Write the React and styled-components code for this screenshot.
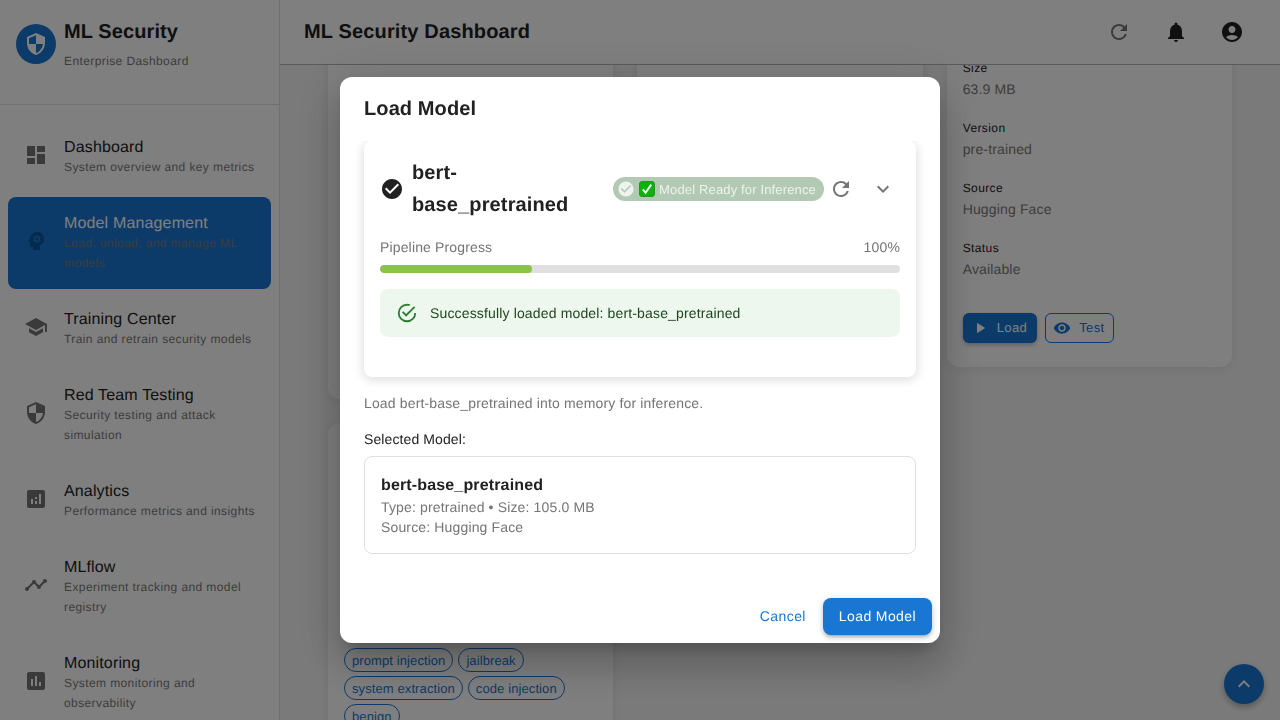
import React from 'react'
import styled, { createGlobalStyle } from 'styled-components'
import {
  MdDashboard, MdPsychology, MdSchool, MdSecurity, MdAnalytics, MdTimeline, MdAssessment,
  MdRefresh, MdNotifications, MdAccountCircle, MdPlayArrow, MdVisibility, MdCheckCircle,
  MdExpandMore, MdKeyboardArrowUp,
} from 'react-icons/md'

const navItems = [
  { icon: MdDashboard, title: 'Dashboard', sub: 'System overview and key metrics' },
  { icon: MdPsychology, title: 'Model Management', sub: 'Load, unload, and manage ML models', active: true },
  { icon: MdSchool, title: 'Training Center', sub: 'Train and retrain security models' },
  { icon: MdSecurity, title: 'Red Team Testing', sub: 'Security testing and attack simulation' },
  { icon: MdAnalytics, title: 'Analytics', sub: 'Performance metrics and insights' },
  { icon: MdTimeline, title: 'MLflow', sub: 'Experiment tracking and model registry' },
  { icon: MdAssessment, title: 'Monitoring', sub: 'System monitoring and observability' },
]

const details = [
  ['Size', '63.9 MB'],
  ['Version', 'pre-trained'],
  ['Source', 'Hugging Face'],
  ['Status', 'Available'],
]

const chips = ['prompt injection', 'jailbreak', 'system extraction', 'code injection', 'benign']

const SuccessOutline = () => (
  <svg width="22" height="22" viewBox="0 0 24 24" fill="currentColor">
    <path d="M20,12A8,8 0 0,1 12,20A8,8 0 0,1 4,12A8,8 0 0,1 12,4C12.76,4 13.5,4.11 14.2,4.31L15.77,2.74C14.61,2.26 13.34,2 12,2A10,10 0 0,0 2,12A10,10 0 0,0 12,22A10,10 0 0,0 22,12M7.91,10.08L6.5,11.5L11,16L21,6L19.59,4.58L11,13.17L7.91,10.08Z" />
  </svg>
)

// the green check mark emoji, no colour emoji font is installed
const CheckEmoji = () => (
  <svg width="16" height="16" viewBox="0 0 16 16" style={{ flex: 'none' }}>
    <rect x="0.5" y="0.5" width="15" height="15" rx="2.5" fill="#0ab30a" stroke="#2f8f2f" />
    <path d="M3.8 8.4 L6.6 11.6 L12.2 3.6" fill="none" stroke="#fff" strokeWidth="1.9" />
  </svg>
)

const App = () => {
  return (
    <Page>
      <GlobalStyle />
      <Sidebar>
        <Brand>
          <BrandLogo><MdSecurity size={24} /></BrandLogo>
          <div>
            <BrandName>ML Security</BrandName>
            <BrandSub>Enterprise Dashboard</BrandSub>
          </div>
        </Brand>
        <NavList>
          {navItems.map((item) => (
            <NavItem key={item.title} $active={item.active}>
              <NavIcon $active={item.active}><item.icon size={24} /></NavIcon>
              <div>
                <NavTitle $active={item.active}>{item.title}</NavTitle>
                <NavSub>{item.sub}</NavSub>
              </div>
            </NavItem>
          ))}
        </NavList>
      </Sidebar>

      <Main>
        <TopBar>
          <TopTitle>ML Security Dashboard</TopTitle>
          <TopActions>
            <TopButton $muted><MdRefresh size={24} /></TopButton>
            <TopButton><MdNotifications size={24} /></TopButton>
            <TopButton><MdAccountCircle size={24} /></TopButton>
          </TopActions>
        </TopBar>
        <Content>
          <CardGrid>
            <Column>
              <Card $height={358} />
              <Card>
                <ChipWrap>
                  {chips.map((c) => <TagChip key={c}>{c}</TagChip>)}
                </ChipWrap>
              </Card>
            </Column>
            <Column>
              <Card $height={358} />
            </Column>
            <Column>
              <Card>
                {details.map(([label, value]) => (
                  <Detail key={label}>
                    <DetailLabel>{label}</DetailLabel>
                    <DetailValue>{value}</DetailValue>
                  </Detail>
                ))}
                <CardButtons>
                  <SmallButton $filled><MdPlayArrow size={18} /><span>Load</span></SmallButton>
                  <SmallButton><MdVisibility size={18} /><span>Test</span></SmallButton>
                </CardButtons>
              </Card>
            </Column>
          </CardGrid>
        </Content>
      </Main>

      <Fab><MdKeyboardArrowUp size={24} /></Fab>

      <Overlay>
        <Dialog>
          <DialogTitle>Load Model</DialogTitle>
          <DialogContent>
            <StatusCard>
              <StatusHeader>
                <MdCheckCircle size={24} color="#212121" />
                <StatusName>bert-base_pretrained</StatusName>
                <ReadyChip>
                  <MdCheckCircle size={18} />
                  <CheckEmoji />
                  <span>Model Ready for Inference</span>
                </ReadyChip>
                <HeaderButton $pad={5}><MdRefresh size={24} /></HeaderButton>
                <HeaderButton $pad={8} $end><MdExpandMore size={24} /></HeaderButton>
              </StatusHeader>
              <ProgressRow>
                <span>Pipeline Progress</span>
                <span>100%</span>
              </ProgressRow>
              <ProgressTrack>
                <ProgressFill style={{ width: '29.2%' }} />
              </ProgressTrack>
              <SuccessAlert>
                <SuccessOutline />
                <span>Successfully loaded model: bert-base_pretrained</span>
              </SuccessAlert>
            </StatusCard>
            <Description>Load bert-base_pretrained into memory for inference.</Description>
            <SelectedLabel>Selected Model:</SelectedLabel>
            <SelectedBox>
              <SelectedName>bert-base_pretrained</SelectedName>
              <SelectedMeta>Type: pretrained • Size: 105.0 MB</SelectedMeta>
              <SelectedMeta>Source: Hugging Face</SelectedMeta>
            </SelectedBox>
          </DialogContent>
          <DialogActions>
            <CancelButton>Cancel</CancelButton>
            <PrimaryButton>Load Model</PrimaryButton>
          </DialogActions>
        </Dialog>
      </Overlay>
    </Page>
  )
}

const GlobalStyle = createGlobalStyle`
  html, body {
    margin: 0;
    height: 100%;
    overflow: hidden;
    background: #f5f5f5;
    font-family: "Liberation Sans", Arial, sans-serif;
    text-rendering: geometricPrecision;
    color: #212121;
  }
  * { box-sizing: border-box; }
  button { font-family: inherit; text-rendering: inherit; }
`

const Page = styled.div`
  display: flex;
  width: 1280px;
  height: 720px;
  overflow: hidden;
`

const Sidebar = styled.aside`
  flex: 0 0 280px;
  height: 720px;
  overflow: hidden;
  background: #fff;
  border-right: 1px solid #e0e0e0;
`

const Brand = styled.div`
  display: flex;
  gap: 8px;
  height: 105px;
  padding: 16px 16px 0;
  border-bottom: 1px solid #e0e0e0;
`

const BrandLogo = styled.div`
  display: flex;
  align-items: center;
  justify-content: center;
  width: 40px;
  height: 40px;
  margin-top: 8px;
  border-radius: 50%;
  background: #1976d2;
  color: #fff;
`

const BrandName = styled.div`
  font-size: 20px;
  font-weight: 700;
  line-height: 32px;
  letter-spacing: 0.1px;
`

const BrandSub = styled.div`
  margin-top: 3px;
  font-size: 12px;
  line-height: 20px;
  letter-spacing: 0.4px;
  color: #7a7a7a;
`

const NavList = styled.nav`
  display: flex;
  flex-direction: column;
  gap: 4px;
  padding: 16px 8px 0;
`

const NavItem = styled.div`
  display: flex;
  align-items: center;
  flex-shrink: 0;
  padding: 12px 16px 16px;
  border-radius: 8px;
  background: ${(p) => (p.$active ? '#1976d2' : 'transparent')};
`

const NavIcon = styled.div`
  display: flex;
  flex: 0 0 40px;
  color: ${(p) => (p.$active ? '#0a54a0' : '#757575')};
`

const NavTitle = styled.div`
  margin: 3px 0 -3px;
  font-size: 16px;
  line-height: 24px;
  letter-spacing: 0.15px;
  color: ${(p) => (p.$active ? '#fff' : '#212121')};
`

const NavSub = styled.div`
  font-size: 12px;
  line-height: 20px;
  letter-spacing: 0.4px;
  color: #7a7a7a;
`

const Main = styled.main`
  display: flex;
  flex: 1;
  flex-direction: column;
  min-width: 0;
`

const TopBar = styled.header`
  display: flex;
  flex: 0 0 65px;
  align-items: center;
  justify-content: space-between;
  padding: 0 28px 0 24px;
  background: #fff;
  border-bottom: 1px solid #b4b4b4;
  position: relative;
  z-index: 1;
`

const TopTitle = styled.h1`
  margin: 0;
  font-size: 20px;
  font-weight: 700;
  line-height: 32px;
  letter-spacing: 0.15px;
`

const TopActions = styled.div`
  display: flex;
  gap: 16px;
`

const TopButton = styled.div`
  display: flex;
  align-items: center;
  justify-content: center;
  width: 40px;
  height: 40px;
  margin-right: ${(p) => (p.$muted ? '1px' : '0')};
  margin-left: ${(p) => (p.$muted ? '-1px' : '0')};
  color: ${(p) => (p.$muted ? '#757575' : '#212121')};
`

const Content = styled.div`
  flex: 1;
  overflow: hidden;
  padding: 0 48px;
`

const CardGrid = styled.div`
  display: grid;
  grid-template-columns: repeat(3, 1fr);
  gap: 24px;
  align-items: start;
  margin-top: -24px;
`

const Column = styled.div`
  display: flex;
  flex-direction: column;
  gap: 24px;
`

const Card = styled.section`
  height: ${(p) => (p.$height ? `${p.$height}px` : 'auto')};
  padding: 16px 16px 24px;
  background: #fff;
  border-radius: 12px;
  box-shadow: 0 2px 12px rgba(0, 0, 0, 0.08);
`

const ChipWrap = styled.div`
  display: flex;
  flex-wrap: wrap;
  gap: 4px 5px;
  margin-top: 209px;
`

const TagChip = styled.span`
  display: inline-flex;
  align-items: center;
  height: 24px;
  padding: 0 7px;
  font-size: 13px;
  letter-spacing: 0.1px;
  color: #1976d2;
  border: 1px solid #1976d2;
  border-radius: 12px;
`

const Detail = styled.div`
  padding-top: 1px;
  margin-bottom: 18px;
`

const DetailLabel = styled.div`
  font-size: 12px;
  line-height: 20px;
  letter-spacing: 0.4px;
  color: #212121;
`

const DetailValue = styled.div`
  margin-top: 1px;
  font-size: 14px;
  line-height: 20px;
  letter-spacing: 0.15px;
  color: #7a7a7a;
`

const CardButtons = styled.div`
  display: flex;
  gap: 8px;
  margin-top: 34px;
`

const SmallButton = styled.button`
  display: inline-flex;
  align-items: center;
  gap: 8px;
  height: 30px;
  padding: ${(p) => (p.$filled ? '0 10px 0 8px' : '0 8px 0 7px')};
  font-size: 13px;
  letter-spacing: 0.4px;
  border-radius: 6px;
  color: ${(p) => (p.$filled ? '#fff' : '#1976d2')};
  background: ${(p) => (p.$filled ? '#1976d2' : 'transparent')};
  border: ${(p) => (p.$filled ? 'none' : '1px solid #1976d2')};
  box-shadow: ${(p) => (p.$filled ? '0 2px 4px rgba(0, 0, 0, 0.25)' : 'none')};

  span {
    margin-bottom: 2px;
  }
`

const Fab = styled.button`
  position: fixed;
  right: 16px;
  bottom: 16px;
  display: flex;
  align-items: center;
  justify-content: center;
  width: 40px;
  height: 40px;
  padding: 0;
  color: #fff;
  background: #1976d2;
  border: none;
  border-radius: 50%;
  box-shadow: 0 3px 6px rgba(0, 0, 0, 0.3);
`

const Overlay = styled.div`
  position: fixed;
  inset: 0;
  z-index: 10;
  display: flex;
  align-items: center;
  justify-content: center;
  background: rgba(0, 0, 0, 0.5);
`

const Dialog = styled.div`
  display: flex;
  flex-direction: column;
  width: 600px;
  height: 566px;
  background: #fff;
  border-radius: 12px;
  box-shadow: 0 11px 15px -7px rgba(0, 0, 0, 0.2), 0 24px 38px 3px rgba(0, 0, 0, 0.14), 0 9px 46px 8px rgba(0, 0, 0, 0.12);
`

const DialogTitle = styled.h2`
  flex: none;
  margin: 0;
  padding: 16px 24px;
  font-size: 20px;
  font-weight: 700;
  line-height: 32px;
  letter-spacing: 0.1px;
`

const DialogContent = styled.div`
  flex: 1;
  overflow: hidden;
  padding: 0 24px;
`

const StatusCard = styled.div`
  height: 236px;
  padding: 16px;
  border-radius: 8px;
  box-shadow: 0 2px 12px rgba(0, 0, 0, 0.16);
`

const StatusHeader = styled.div`
  display: flex;
  align-items: center;
  height: 64px;
`

const StatusName = styled.div`
  flex: 1;
  min-width: 0;
  margin: 0 8px;
  font-size: 20px;
  font-weight: 700;
  line-height: 32px;
  letter-spacing: 0.13px;
`

const ReadyChip = styled.div`
  display: inline-flex;
  flex: none;
  align-items: center;
  gap: 4px;
  height: 24px;
  padding: 0 8px 0 4px;
  font-size: 13px;
  letter-spacing: 0.15px;
  white-space: nowrap;
  color: #eef3ee;
  background: #b2c9b4;
  border-radius: 12px;
`

const HeaderButton = styled.div`
  display: flex;
  flex: none;
  padding: ${(p) => p.$pad}px;
  margin-left: ${(p) => (p.$end ? '5px' : '0')};
  margin-right: ${(p) => (p.$end ? '-3px' : '0')};
  color: #757575;
`

const ProgressRow = styled.div`
  display: flex;
  justify-content: space-between;
  margin-top: 16px;
  font-size: 14px;
  line-height: 20px;
  letter-spacing: 0.15px;
  color: #757575;
`

const ProgressTrack = styled.div`
  height: 8px;
  margin-top: 8px;
  overflow: hidden;
  background: #e0e0e0;
  border-radius: 4px;
`

const ProgressFill = styled.div`
  height: 100%;
  background: #8bc34a;
  border-radius: 4px;
`

const SuccessAlert = styled.div`
  display: flex;
  align-items: center;
  gap: 12px;
  height: 48px;
  margin-top: 16px;
  padding: 0 16px;
  font-size: 14px;
  letter-spacing: 0.15px;
  color: #1e4620;
  background: #edf7ed;
  border-radius: 8px;

  svg {
    color: #2e7d32;
    flex: none;
  }
`

const Description = styled.p`
  margin: 16px 0 0;
  font-size: 14px;
  line-height: 20px;
  letter-spacing: 0.15px;
  color: #757575;
`

const SelectedLabel = styled.div`
  margin-top: 16px;
  font-size: 14px;
  line-height: 20px;
  letter-spacing: 0.1px;
  color: #212121;
`

const SelectedBox = styled.div`
  margin-top: 7px;
  padding: 16px;
  background: #fff;
  border: 1px solid #e0e0e0;
  border-radius: 8px;
`

const SelectedName = styled.div`
  padding-top: 1px;
  margin-bottom: -1px;
  font-size: 16px;
  font-weight: 700;
  line-height: 24px;
  letter-spacing: 0.15px;
`

const SelectedMeta = styled.div`
  font-size: 14px;
  line-height: 20px;
  letter-spacing: 0.15px;
  color: #757575;
`

const DialogActions = styled.div`
  display: flex;
  flex: none;
  align-items: center;
  justify-content: flex-end;
  gap: 9px;
  padding: 8px;
`

const CancelButton = styled.button`
  padding: 5px 8px 7px;
  font-size: 14px;
  line-height: 24px;
  letter-spacing: 0.4px;
  color: #1976d2;
  background: none;
  border: none;
`

const PrimaryButton = styled.button`
  height: 37px;
  padding: 0 16px 2px;
  font-size: 14px;
  letter-spacing: 0.4px;
  color: #fff;
  background: #1976d2;
  border: none;
  border-radius: 8px;
  box-shadow: 0 3px 3px -2px rgba(0, 0, 0, 0.2), 0 3px 4px rgba(0, 0, 0, 0.14), 0 1px 8px rgba(0, 0, 0, 0.12);
`

export default App
